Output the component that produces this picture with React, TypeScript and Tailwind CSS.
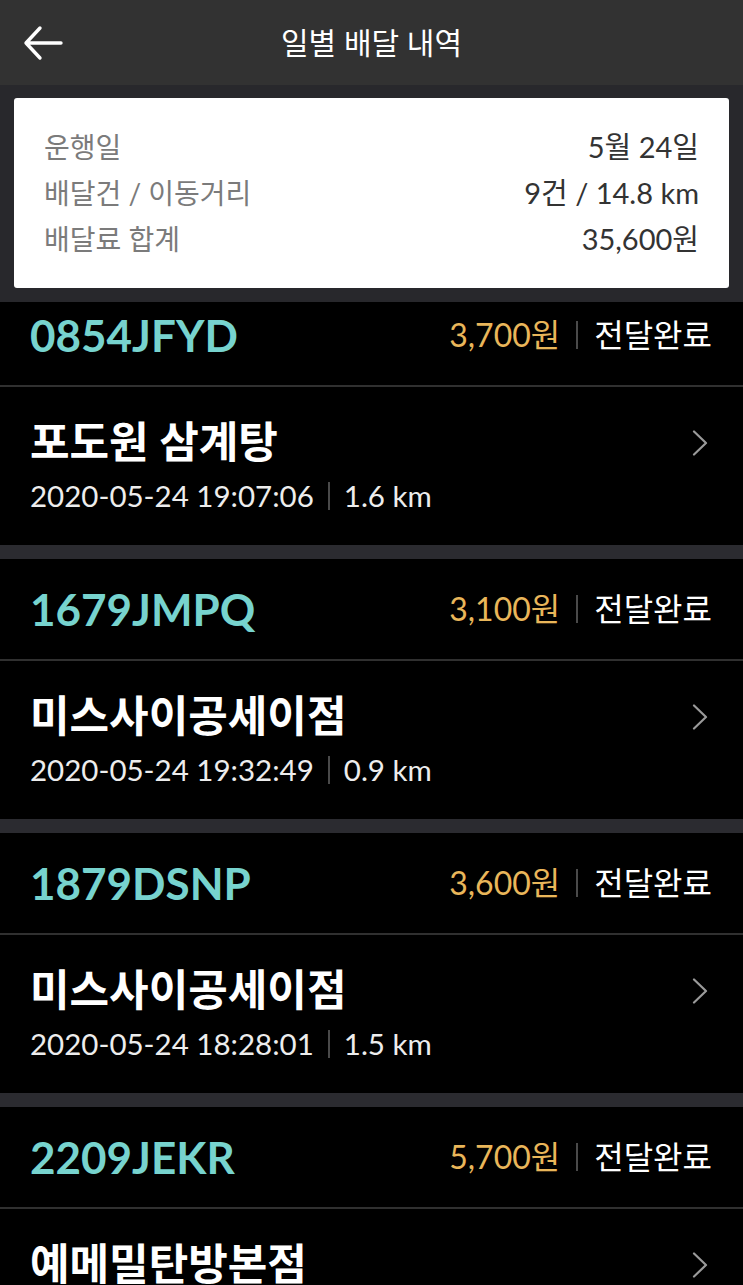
import React from 'react';

const font = { fontFamily: "Lato, 'Noto Sans CJK KR', sans-serif" };

type Delivery = {
  code: string;
  fee: string;
  status: string;
  store: string;
  time: string;
  distance: string;
};

const deliveries: Delivery[] = [
  { code: '0854JFYD', fee: '3,700원', status: '전달완료', store: '포도원 삼계탕', time: '2020-05-24 19:07:06', distance: '1.6 km' },
  { code: '1679JMPQ', fee: '3,100원', status: '전달완료', store: '미스사이공세이점', time: '2020-05-24 19:32:49', distance: '0.9 km' },
  { code: '1879DSNP', fee: '3,600원', status: '전달완료', store: '미스사이공세이점', time: '2020-05-24 18:28:01', distance: '1.5 km' },
  { code: '2209JEKR', fee: '5,700원', status: '전달완료', store: '예메밀탄방본점', time: '2020-05-24 18:02:13', distance: '2.1 km' },
];

function BackArrow() {
  return (
    <svg width="42" height="36" viewBox="0 0 42 36" fill="none">
      <path d="M39 18H4M18 3L4 18l14 15" stroke="white" strokeWidth="3.4" strokeLinecap="round" strokeLinejoin="round" />
    </svg>
  );
}

function Chevron() {
  return (
    <svg width="16" height="26" viewBox="0 0 16 26" fill="none">
      <path d="M2 1.5l12 11.5L2 24.5" stroke="#9a9a9a" strokeWidth="2.2" strokeLinecap="round" strokeLinejoin="round" />
    </svg>
  );
}

function SummaryRow({ label, value }: { label: string; value: string }) {
  return (
    <div className="flex h-[46px] items-center justify-between">
      <span className="text-[28px] text-[#7b7b7b]">{label}</span>
      <span className="text-[29px] text-[#333333]">{value}</span>
    </div>
  );
}

function DeliveryItem({ d }: { d: Delivery }) {
  return (
    <div>
      <div className="flex h-[100px] items-center justify-between bg-black pl-[30px] pr-[31px]">
        <span className="text-[44px] font-bold leading-none text-[#77d3ce]">{d.code}</span>
        <div className="flex items-center">
          <span className="text-[32px] leading-none text-[#e9b65a]">{d.fee}</span>
          <span className="mx-[16px] h-[28px] w-[2px] bg-[#4a4a4a]" />
          <span className="text-[32px] leading-none text-white">{d.status}</span>
        </div>
      </div>
      <div className="h-[2px] bg-[#303030]" />
      <div className="flex h-[158px] items-start justify-between bg-black pl-[30px] pr-[35px] pt-[32px]">
        <div className="flex flex-col">
          <span className="text-[43px] font-bold leading-[46px] text-white">{d.store}</span>
          <div className="mt-[13px] flex h-[36px] items-center">
            <span className="text-[29.5px] leading-none text-[#ededed]">{d.time}</span>
            <span className="mx-[14px] h-[28px] w-[2px] bg-[#4a4a4a]" />
            <span className="text-[29.5px] leading-none text-[#ededed]">{d.distance}</span>
          </div>
        </div>
        <div className="mt-[11px]">
          <Chevron />
        </div>
      </div>
      <div className="h-[14px] bg-[#2b2b30]" />
    </div>
  );
}

export default function App() {
  return (
    <div className="h-[1285px] w-[743px] overflow-hidden bg-black" style={font}>
      <header className="relative flex h-[85px] items-center justify-center bg-[#323232]">
        <div className="absolute left-[22px] top-[25px]">
          <BackArrow />
        </div>
        <h1 className="text-[30px] text-white">일별 배달 내역</h1>
      </header>

      <section className="bg-[#28282c] px-[14px] pb-[14px] pt-[13px]">
        <div className="rounded-[3px] bg-white px-[30px] py-[26px]">
          <SummaryRow label="운행일" value="5월 24일" />
          <SummaryRow label="배달건 / 이동거리" value="9건 / 14.8 km" />
          <SummaryRow label="배달료 합계" value="35,600원" />
        </div>
      </section>

      <div className="overflow-hidden">
        <div className="-mt-[17px]">
          {deliveries.map((d) => (
            <DeliveryItem key={d.code} d={d} />
          ))}
        </div>
      </div>
    </div>
  );
}
